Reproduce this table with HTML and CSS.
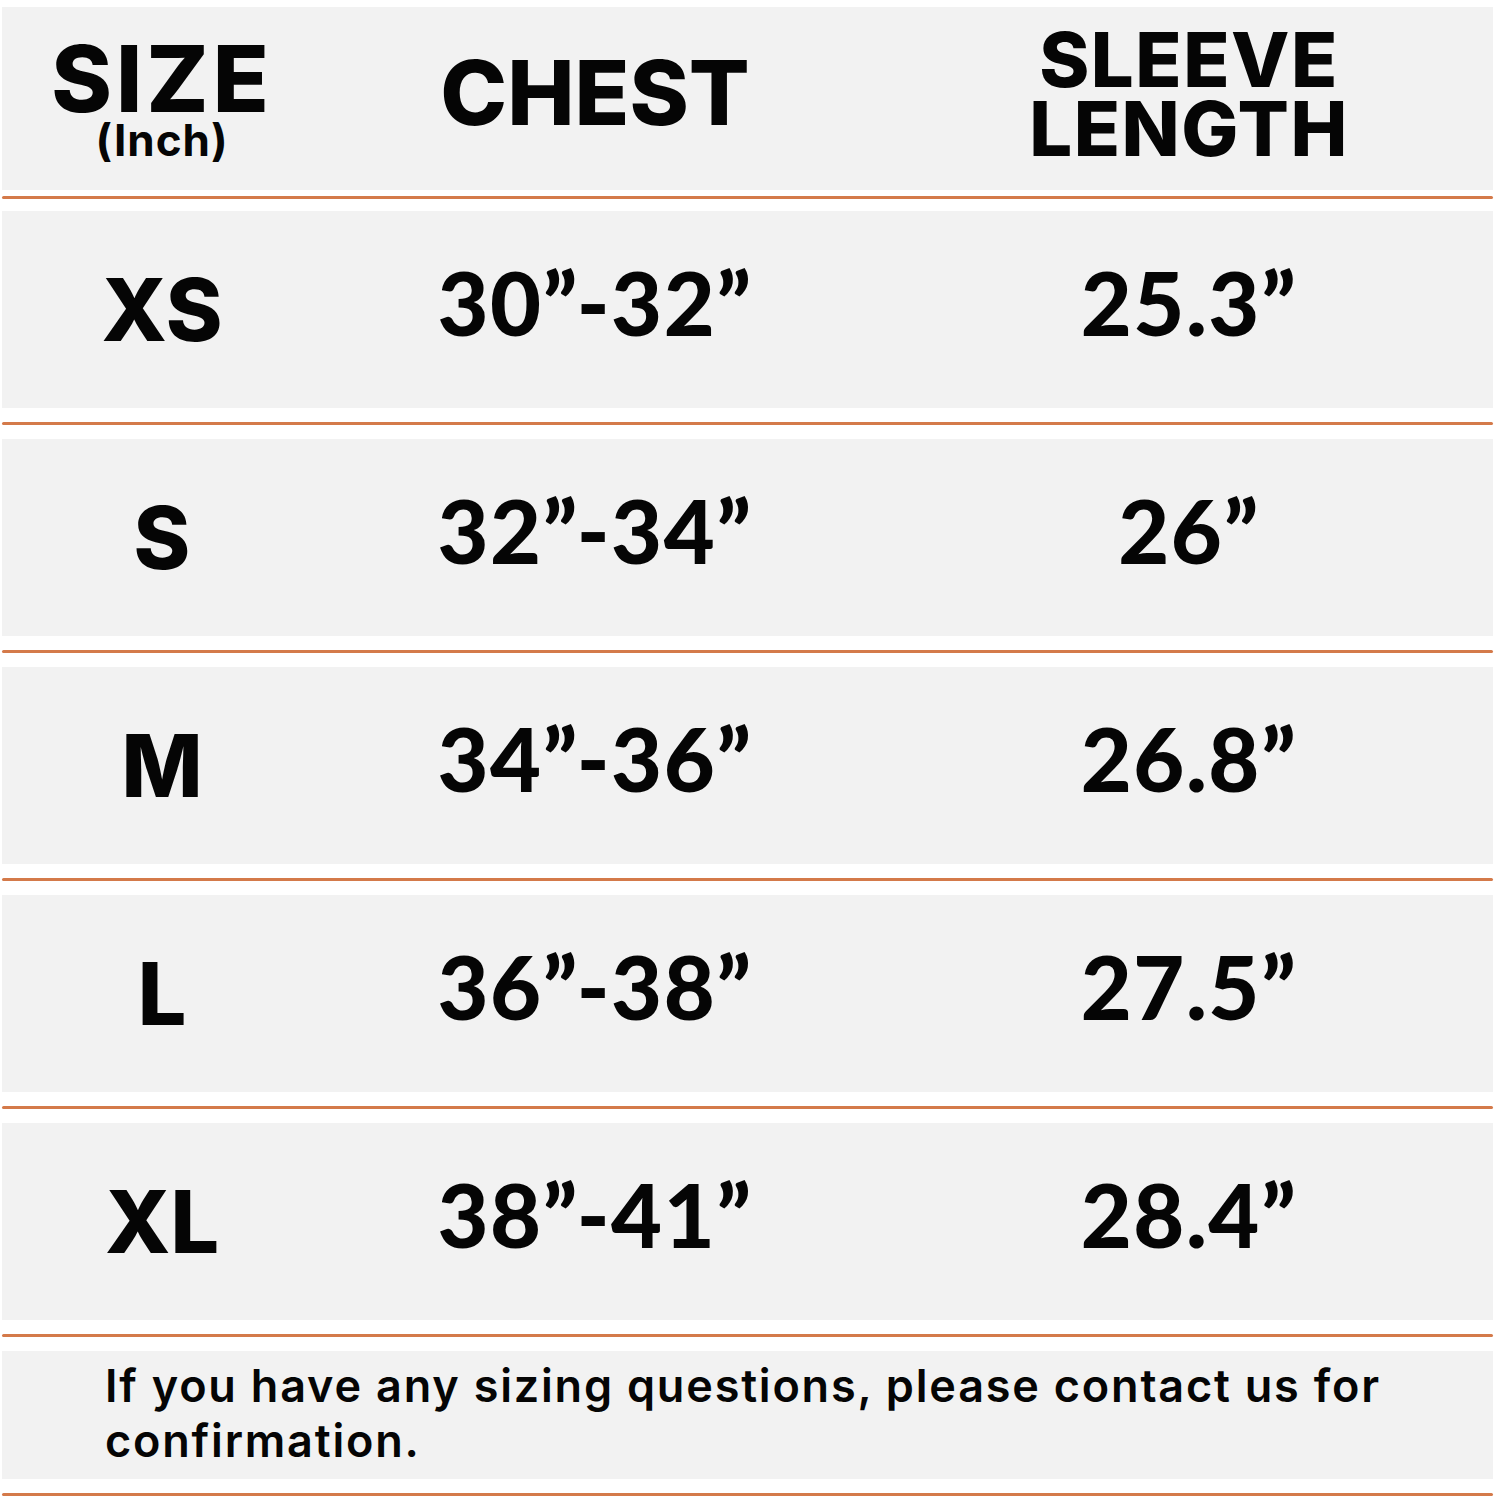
FILE: index.html
```html
<!DOCTYPE html>
<html lang="en">
<head>
<meta charset="utf-8">
<title>Size Chart</title>
<link rel="stylesheet" href="styles.css">
</head>
<body>
<div class="chart">
  <div class="row head">
    <div class="cell c1"><div class="size-title">SIZE</div><div class="unit">(Inch)</div></div>
    <div class="cell c2"><div class="h-chest">CHEST</div></div>
    <div class="cell c3"><div class="h-sleeve">SLEEVE<br>LENGTH</div></div>
  </div>
  <div class="rule rule-head"></div>

  <div class="row data first">
    <div class="cell c1">XS</div><div class="cell c2 num">30”-32”</div><div class="cell c3 num">25.3”</div>
  </div>
  <div class="rule"></div>

  <div class="row data">
    <div class="cell c1">S</div><div class="cell c2 num">32”-34”</div><div class="cell c3 num">26”</div>
  </div>
  <div class="rule"></div>

  <div class="row data">
    <div class="cell c1">M</div><div class="cell c2 num">34”-36”</div><div class="cell c3 num">26.8”</div>
  </div>
  <div class="rule"></div>

  <div class="row data">
    <div class="cell c1">L</div><div class="cell c2 num">36”-38”</div><div class="cell c3 num">27.5”</div>
  </div>
  <div class="rule"></div>

  <div class="row data">
    <div class="cell c1">XL</div><div class="cell c2 num">38”-41”</div><div class="cell c3 num">28.4”</div>
  </div>
  <div class="rule"></div>

  <div class="note">If you have any sizing questions, please contact us for confirmation.</div>
  <div class="rule"></div>
</div>
</body>
</html>
```

FILE: styles.css
```css
html, body {
  margin: 0;
  padding: 0;
  background: #ffffff;
}
body {
  font-family: Inter, "Liberation Sans", sans-serif;
  color: #050505;
}
.chart {
  margin: 0 4px 0 2px;
  padding-top: 7px;
}
.row {
  background: #f2f2f2;
  display: grid;
  grid-template-columns: 320px 546px 1fr;
  align-items: center;
}
.head {
  height: 183px;
}
.data {
  height: 197px;
  margin-top: 14px;
}
.data.first {
  margin-top: 12px;
}
.cell {
  text-align: center;
  font-weight: 800;
}
.c3 {
  padding-left: 17px;
}
.data .cell {
  font-size: 86px;
  line-height: 1;
}
.data .cell.num {
  font-family: Lato, Inter, sans-serif;
  font-weight: 900;
  font-size: 88px;
  letter-spacing: 1.5px;
  padding-bottom: 16px;
}
.size-title {
  font-size: 92px;
  line-height: 80px;
  letter-spacing: 4px;
  margin-top: 2px;
}
.unit {
  font-size: 44px;
  font-weight: 700;
  line-height: 42px;
  letter-spacing: 1px;
}
.h-chest {
  font-size: 90px;
  line-height: 1;
  margin-top: -12px;
}
.h-sleeve {
  font-size: 76px;
  line-height: 69px;
  letter-spacing: 1.5px;
  margin-top: -10px;
}
.rule {
  height: 3px;
  background: #d47a4a;
  border-radius: 2px;
  margin-top: 14px;
}
.rule-head {
  margin-top: 6px;
}
.note {
  background: #f2f2f2;
  margin-top: 14px;
  height: 128px;
  box-sizing: border-box;
  padding: 7px 40px 0 103px;
  font-size: 45px;
  line-height: 55px;
  font-weight: 600;
  letter-spacing: 1.8px;
}
```
